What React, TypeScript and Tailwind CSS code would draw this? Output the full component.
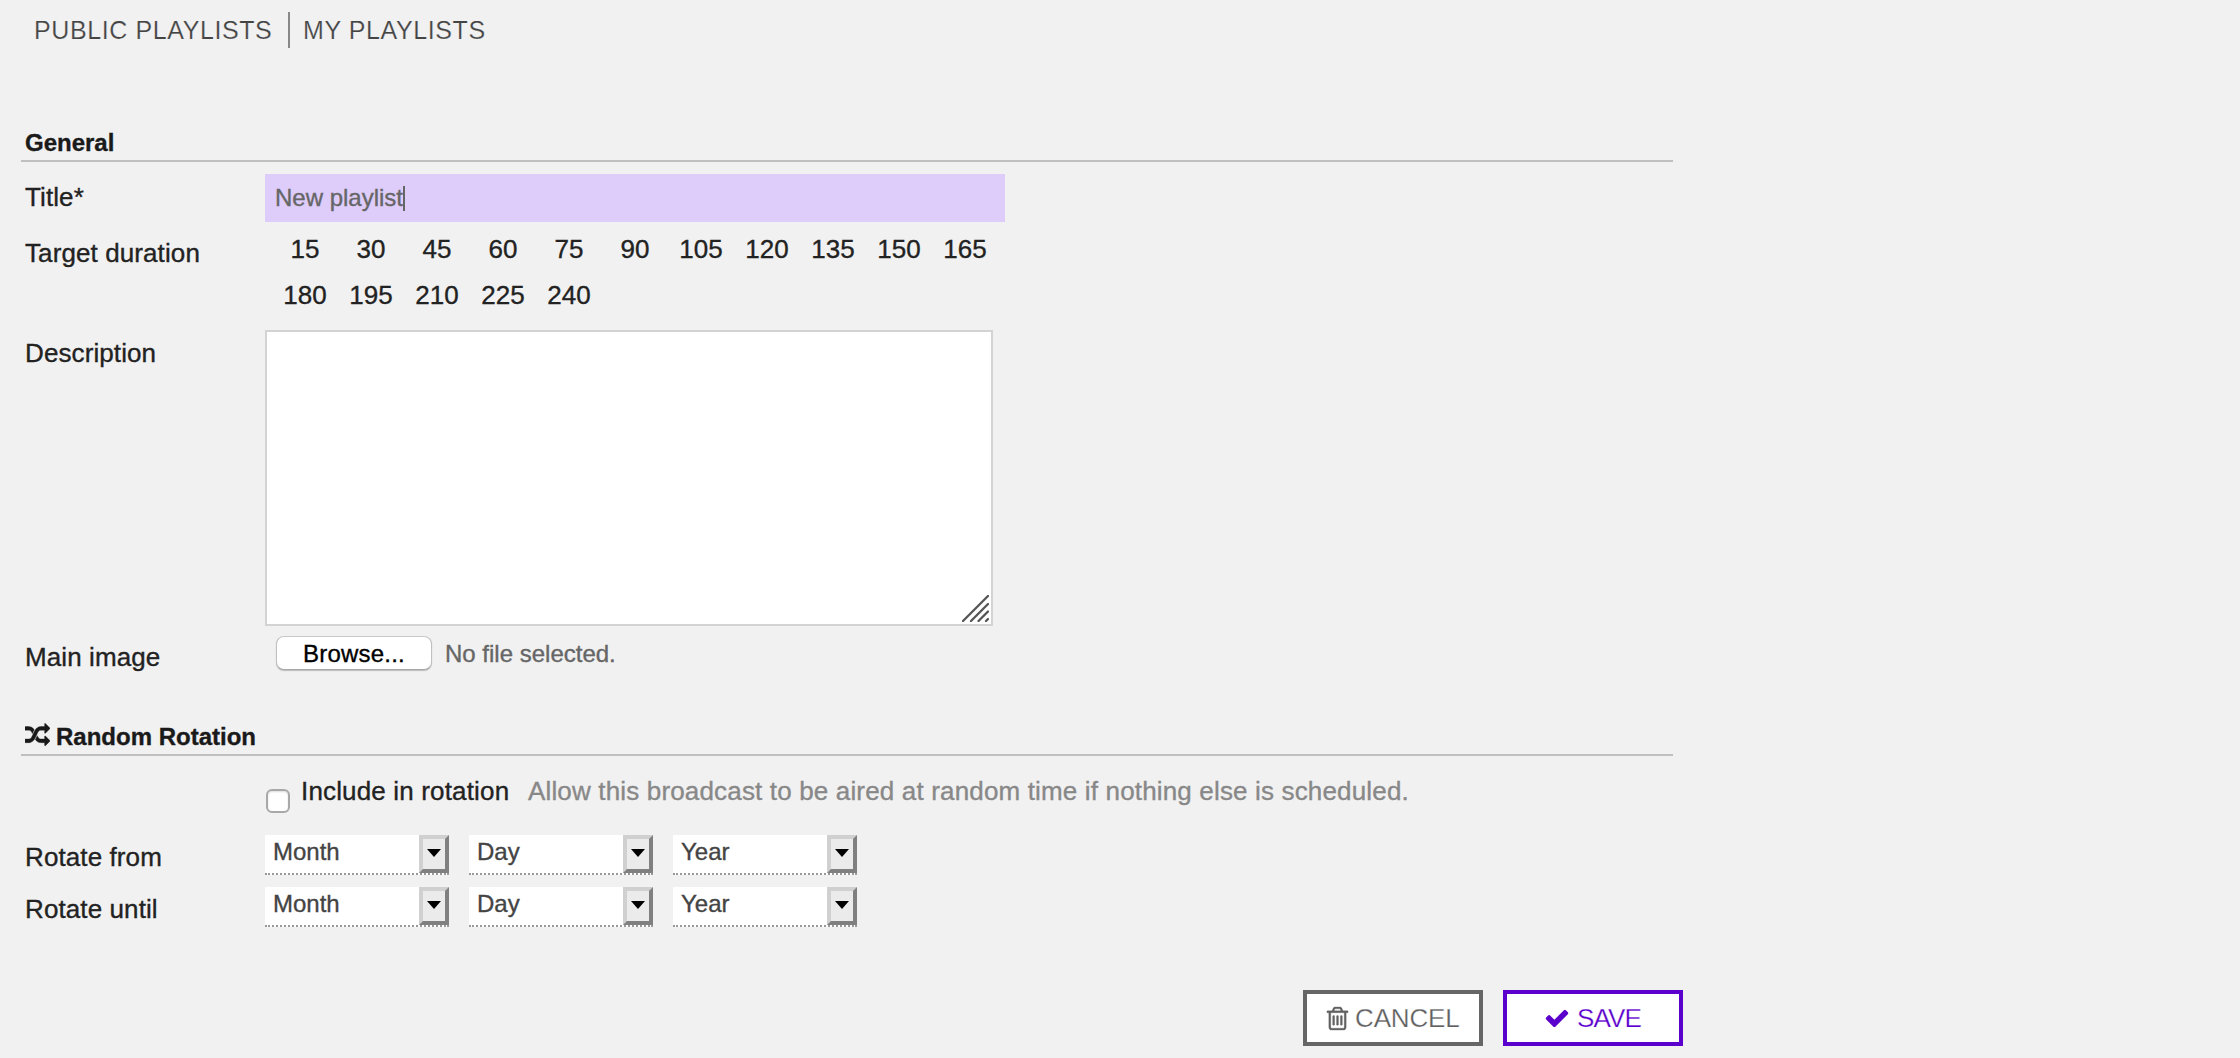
import React from "react";

const durations = [15, 30, 45, 60, 75, 90, 105, 120, 135, 150, 165, 180, 195, 210, 225, 240];

function ShuffleIcon() {
  return (
    <svg viewBox="0 0 1792 1792" className="mt-[4px] size-[25px] fill-current stroke-current stroke-[30]">
      <path d="M666 481q-60 92-137 273-22-45-37-72.5t-40.5-63.5-51-56.5-63-35-81.5-14.5h-224q-14 0-23-9t-9-23v-192q0-14 9-23t23-9h224q250 0 410 225zm1126 799q0 14-9 23l-320 320q-9 9-23 9-13 0-22.5-9.5t-9.5-22.5v-192q-32 0-85 .5t-81 1-73-1-71-5-64-10.5-63-18.5-58-28.5-59-40-55-53.5-56-69.5q59-93 136-273 22 45 37 72.5t40.5 63.5 51 56.5 63 35 81.5 14.5h256v-192q0-14 9-23t23-9q12 0 24 10l319 319q9 9 9 23zm0-896q0 14-9 23l-320 320q-9 9-23 9-13 0-22.5-9.5t-9.5-22.5v-192h-256q-48 0-87 15t-69 45-51 61.5-45 77.5q-32 62-78 171-29 66-49.5 111t-54 105-64 100-74 83-90 68.5-106.5 42-128 16.5h-224q-14 0-23-9t-9-23v-192q0-14 9-23t23-9h224q48 0 87-15t69-45 51-61.5 45-77.5q32-62 78-171 29-66 49.5-111t54-105 64-100 74-83 90-68.5 106.5-42 128-16.5h256v-192q0-14 9-23t23-9q12 0 24 10l319 319q9 9 9 23z" />
    </svg>
  );
}

function TrashIcon() {
  return (
    <svg viewBox="0 0 1792 1792" className="size-[27px] fill-current stroke-current stroke-[20]">
      <path d="M704 736v576q0 14-9 23t-23 9h-64q-14 0-23-9t-9-23v-576q0-14 9-23t23-9h64q14 0 23 9t9 23zm256 0v576q0 14-9 23t-23 9h-64q-14 0-23-9t-9-23v-576q0-14 9-23t23-9h64q14 0 23 9t9 23zm256 0v576q0 14-9 23t-23 9h-64q-14 0-23-9t-9-23v-576q0-14 9-23t23-9h64q14 0 23 9t9 23zm128 724v-948h-896v948q0 22 7 40.5t14.5 27 10.5 8.5h832q3 0 10.5-8.5t14.5-27 7-40.5zm-672-1076h448l-48-117q-7-9-17-11h-317q-10 2-17 11zm928 32v64q0 14-9 23t-23 9h-96v948q0 83-47 143.5t-113 60.5h-832q-66 0-113-58.5t-47-141.5v-952h-96q-14 0-23-9t-9-23v-64q0-14 9-23t23-9h309l70-167q15-37 54-63t79-26h320q40 0 79 26t54 63l70 167h309q14 0 23 9t9 23z" />
    </svg>
  );
}

function CheckIcon() {
  return (
    <svg viewBox="0 0 1792 1792" className="size-[26px] fill-current">
      <path d="M1671 566q0 40-28 68l-724 724-136 136q-28 28-68 28t-68-28l-136-136-362-362q-28-28-28-68t28-68l136-136q28-28 68-28t68 28l294 295 656-657q28-28 68-28t68 28l136 136q28 28 28 68z" />
    </svg>
  );
}

function Heading({ children }: { children: React.ReactNode }) {
  return (
    <h2 className="flex h-[37px] gap-[6px] border-b-2 border-[#bfbfbf] pl-1 text-[24px] leading-[35px] font-bold text-[#1a1a1a]">
      {children}
    </h2>
  );
}

function Row({ label, labelClass, children }: { label: string; labelClass: string; children: React.ReactNode }) {
  return (
    <div className="flex pl-1">
      <div className={"w-60 shrink-0 text-[26px] tracking-[0.1px] " + labelClass}>{label}</div>
      {children}
    </div>
  );
}

function Dropdown({ text }: { text: string }) {
  return (
    <div className="flex h-10 w-[184px] border-b-2 border-dotted border-[#999] bg-white text-[24px] leading-[34px] text-[#444]">
      <span className="flex-1 pl-2">{text}</span>
      <span className="flex h-[38px] w-[30px] items-center justify-center border-4 border-t-[#d0d0d0] border-r-[#808080] border-b-[#808080] border-l-[#d0d0d0] bg-[#ebebeb]">
        <svg viewBox="0 0 14 8" className="mt-[-2px] h-2 w-[14px]">
          <path d="M0 0H14L7 8Z" fill="#000" />
        </svg>
      </span>
    </div>
  );
}

function DateRow({ label }: { label: string }) {
  return (
    <Row label={label} labelClass="leading-[44px] h-10">
      <div className="flex gap-5">
        <Dropdown text="Month" />
        <Dropdown text="Day" />
        <Dropdown text="Year" />
      </div>
    </Row>
  );
}

export default function App() {
  return (
    <main className="h-[1058px] w-full overflow-hidden bg-[#f1f1f1] pt-3 font-['Liberation_Sans',Arial,sans-serif] text-[#222] [-webkit-text-stroke:0.35px_currentColor]">
      <nav className="flex h-9 pl-[34px] text-[25px] leading-[37px] tracking-[0.6px] text-[#444] [-webkit-text-stroke:0.2px_#f1f1f1]">
        <a className="w-[256px] border-r-2 border-[#888]">PUBLIC PLAYLISTS</a>
        <a className="pl-[13px]">MY PLAYLISTS</a>
      </nav>

      <section className="mt-[77px] ml-[21px] w-[1652px]">
        <Heading>General</Heading>
        <div className="mt-3">
          <Row label="Title*" labelClass="leading-[46px]">
            <div className="flex h-12 w-[740px] items-center bg-[#deccfb] pl-[10px] text-[24px] text-[#666]">
              <span className="leading-[48px]">New playlist</span>
              <span className="h-[25px] w-[2px] bg-[#666]" />
            </div>
          </Row>
          <Row label="Target duration" labelClass="pt-2 leading-[46px]">
            <div className="mb-3 ml-[7px] grid w-[726px] grid-cols-11 pt-1 text-center text-[26px] leading-[46px]">
              {durations.map((d) => (
                <span key={d}>{d}</span>
              ))}
            </div>
          </Row>
          <Row label="Description" labelClass="leading-[46px]">
            <div className="relative h-[296px] w-[728px]">
              <textarea className="block size-full resize-none border-2 border-[#d3d3d3] bg-white" />
              <svg viewBox="0 0 27 27" className="absolute right-[4px] bottom-[4px] size-[27px]" stroke="#555" strokeWidth="2.3" strokeLinecap="round">
                <path d="M1 26L26 1M9 26L26 9M16.500 26L26 16.500M24 26L26 24" />
              </svg>
            </div>
          </Row>
          <Row label="Main image" labelClass="h-[54px] pt-2 leading-[46px]">
            <div className="flex pt-[10px] pl-[11px] text-[24px] leading-[35px]">
              <button className="h-[34px] w-[156px] rounded-lg border border-t-[#c8c8c8] border-r-[#c0c0c0] border-b-[#a8a8a8] border-l-[#c0c0c0] bg-white leading-[33px] tracking-[0.2px] text-black shadow-[0_1px_1px_#bbb]">
                Browse...
              </button>
              <span className="pl-[13px] text-[#666]">No file selected.</span>
            </div>
          </Row>
        </div>
      </section>

      <section className="mt-[39px] ml-[21px] w-[1652px]">
        <Heading>
          <ShuffleIcon />
          Random Rotation
        </Heading>
        <div className="flex h-[79px] pt-3 pl-[245px] text-[26px] leading-[46px] tracking-[0.16px]">
          <span className="mt-[21px] size-6 shrink-0 rounded-[6px] border-2 border-[#a8a8a8] bg-white shadow-[inset_0_1px_2px_#ddd]" />
          <span className="w-[228px] shrink-0 pl-[11px]">Include in rotation</span>
          <span className="pl-[10px] whitespace-nowrap text-[#888]">
            Allow this broadcast to be aired at random time if nothing else is scheduled.
          </span>
        </div>
        <div className="flex flex-col gap-3">
          <DateRow label="Rotate from" />
          <DateRow label="Rotate until" />
        </div>
      </section>

      <div className="mt-[63px] flex w-[1683px] justify-end gap-5 text-[26px] leading-[50px]">
        <button className="flex h-14 w-[180px] items-center border-4 border-[#666] bg-white pl-[17px] text-[#606060]">
          <TrashIcon />
          <span className="pl-1 tracking-[-0.15px] [-webkit-text-stroke:0.25px_#fff]">CANCEL</span>
        </button>
        <button className="flex h-14 w-[180px] items-center border-4 border-[#5b00cc] bg-white pl-[37px] text-[#5b00cc]">
          <CheckIcon />
          <span className="pl-[7px] tracking-[-0.9px] [-webkit-text-stroke:0.25px_#fff]">SAVE</span>
        </button>
      </div>
    </main>
  );
}
